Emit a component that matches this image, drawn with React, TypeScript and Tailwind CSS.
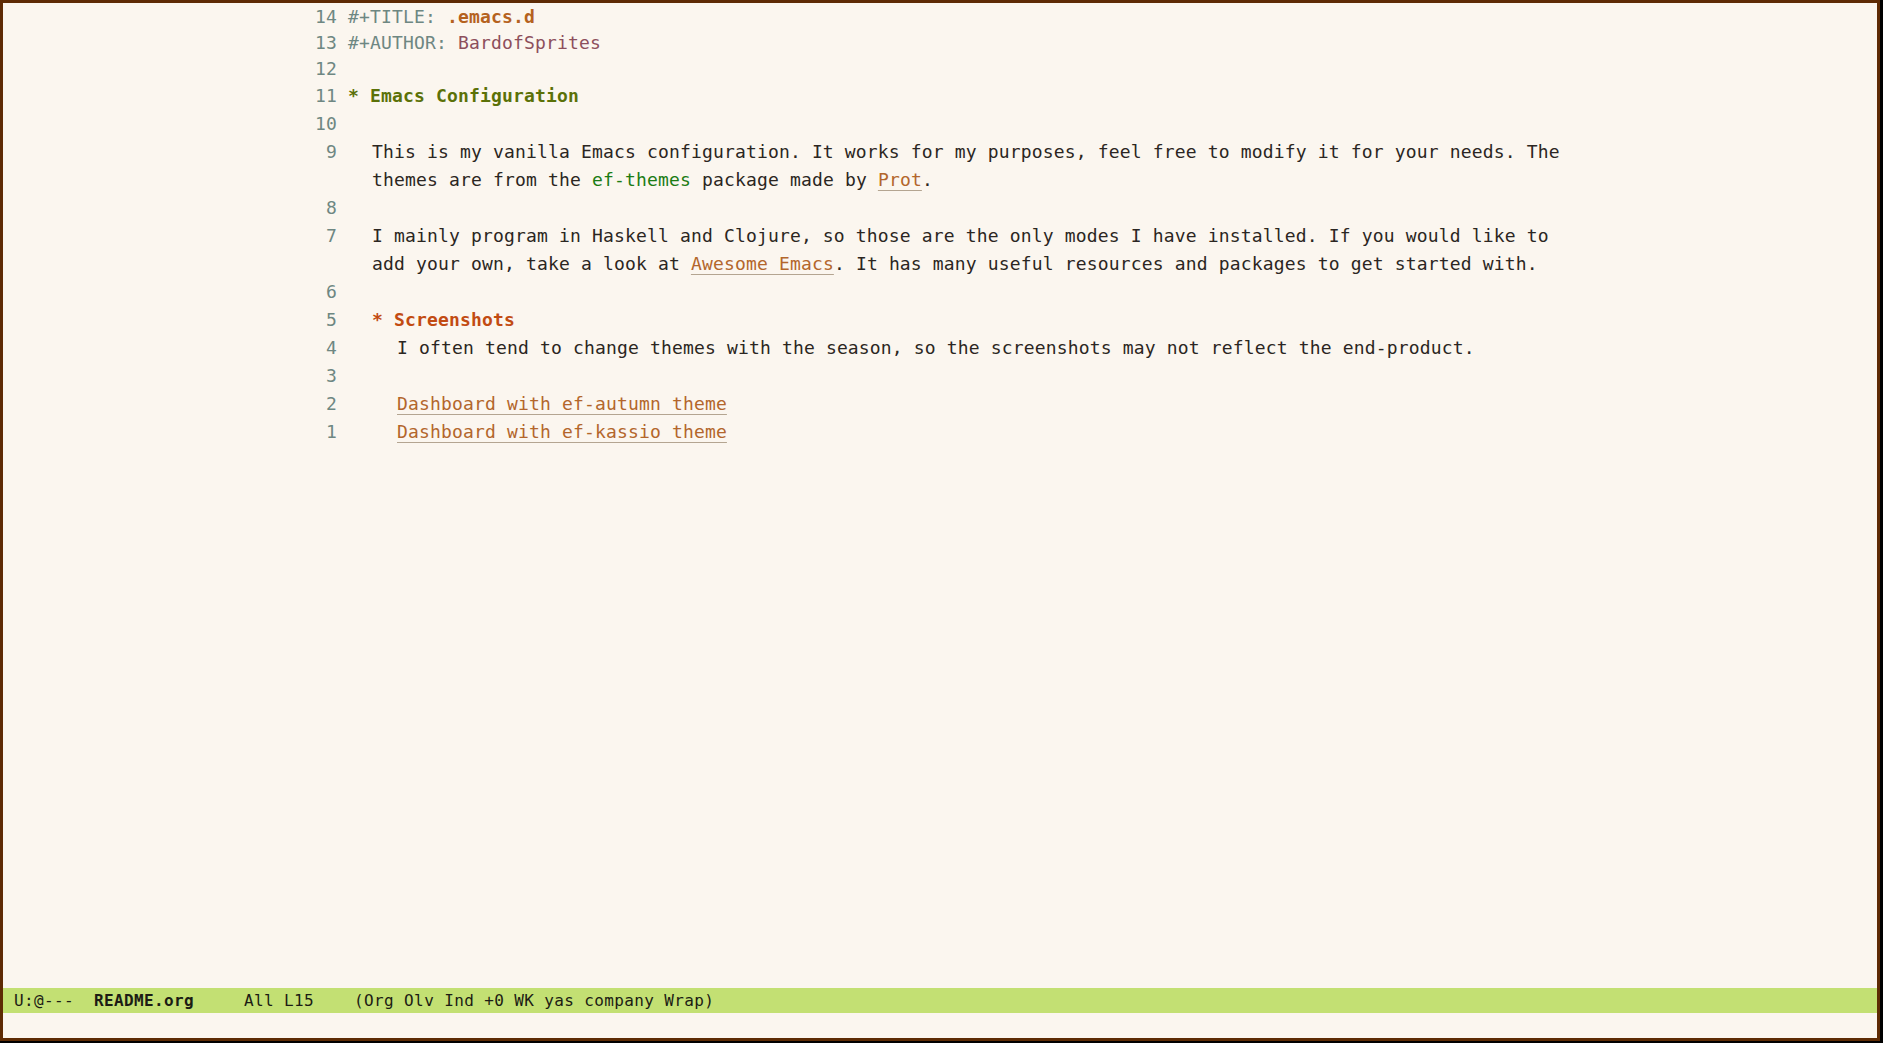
import React from "react";

const NUM = "text-[#6e8782]";
const TXT = "text-[#2b2622]";

function Row({ n, h, ind, children }: { n?: string; h: string; ind?: string; children?: React.ReactNode }) {
  return (
    <div className={`flex items-center ${h}`}>
      <div className={`w-[22px] text-right ${NUM}`}>{n ?? ""}</div>
      <div className={`ml-[11px] whitespace-pre ${ind ?? ""} ${TXT}`}>{children}</div>
    </div>
  );
}

function Link({ children }: { children: React.ReactNode }) {
  return (
    <span className="text-[#b3662c] underline decoration-[#b4a591] underline-offset-[4px] decoration-1">
      {children}
    </span>
  );
}

export default function App() {
  return (
    <div className="w-[1883px] h-[1043px] bg-black overflow-hidden">
      <div className="w-[1880px] h-[1041px] border-[3px] border-[#5e2b04] bg-[#fbf6ef] flex flex-col">
        <div
          className="h-[985px] pl-[312px] text-[18px] tracking-[0.16px]"
          style={{ fontFamily: '"DejaVu Sans Mono", monospace' }}
        >
          <Row n="14" h="h-[26px]">
            <span className={NUM}>#+TITLE: </span>
            <span className="font-bold text-[#b5621e]">.emacs.d</span>
          </Row>
          <Row n="13" h="h-[26px]">
            <span className={NUM}>#+AUTHOR: </span>
            <span className="text-[#8d4f5c]">BardofSprites</span>
          </Row>
          <Row n="12" h="h-[26px]" />
          <Row n="11" h="h-[28px]">
            <span className="font-bold text-[#5b7108]">* Emacs Configuration</span>
          </Row>
          <Row n="10" h="h-[28px]" />
          <Row n="9" h="h-[28px]" ind="pl-[24px]">
            {"This is my vanilla Emacs configuration. It works for my purposes, feel free to modify it for your needs. The"}
          </Row>
          <Row h="h-[28px]" ind="pl-[24px]">
            {"themes are from the "}
            <span className="text-[#1b7c14]">ef-themes</span>
            {" package made by "}
            <Link>Prot</Link>
            {"."}
          </Row>
          <Row n="8" h="h-[28px]" />
          <Row n="7" h="h-[28px]" ind="pl-[24px]">
            {"I mainly program in Haskell and Clojure, so those are the only modes I have installed. If you would like to"}
          </Row>
          <Row h="h-[28px]" ind="pl-[24px]">
            {"add your own, take a look at "}
            <Link>Awesome Emacs</Link>
            {". It has many useful resources and packages to get started with."}
          </Row>
          <Row n="6" h="h-[28px]" />
          <Row n="5" h="h-[28px]" ind="pl-[24px]">
            <span className="font-bold text-[#c24b12]">* Screenshots</span>
          </Row>
          <Row n="4" h="h-[28px]" ind="pl-[49px]">
            {"I often tend to change themes with the season, so the screenshots may not reflect the end-product."}
          </Row>
          <Row n="3" h="h-[28px]" />
          <Row n="2" h="h-[28px]" ind="pl-[49px]">
            <Link>Dashboard with ef-autumn theme</Link>
          </Row>
          <Row n="1" h="h-[28px]" ind="pl-[49px]">
            <Link>Dashboard with ef-kassio theme</Link>
          </Row>
        </div>
        <div
          className="h-[25px] bg-[#c3e073] flex items-center pl-[11px] text-[16px] tracking-[0.37px] text-[#1c1c14] whitespace-pre"
          style={{ fontFamily: '"DejaVu Sans Mono", monospace' }}
        >
          <span>{"U:@---  "}</span>
          <span className="font-bold">README.org</span>
          <span>{"     All L15    (Org Olv Ind +0 WK yas company Wrap)"}</span>
        </div>
        <div className="flex-1 bg-[#fbf6ef]" />
      </div>
    </div>
  );
}
